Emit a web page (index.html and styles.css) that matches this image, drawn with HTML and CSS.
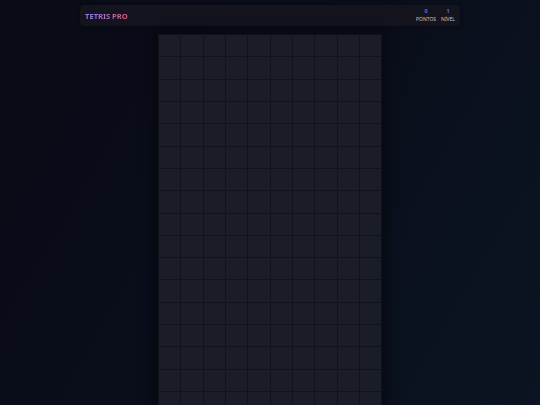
FILE: index.html
```html
<!DOCTYPE html>
<html lang="pt">
<head>
<meta charset="utf-8">
<title>Tetris Pro</title>
<link rel="stylesheet" href="styles.css">
</head>
<body>
<div class="app">
  <header class="topbar">
    <h1 class="title">TETRIS PRO</h1>
    <div class="stats">
      <div class="stat"><span class="value">0</span><span class="label">PONTOS</span></div>
      <div class="stat"><span class="value">1</span><span class="label">NÍVEL</span></div>
    </div>
  </header>
  <main class="stage">
    <div class="board" id="board"></div>
  </main>
</div>
<script src="app.js"></script>
</body>
</html>
```
FILE: styles.css
```css
html, body {
  margin: 0;
  padding: 0;
  height: 100%;
}
body {
  background: linear-gradient(120deg, #090b16 0%, #0a0e1b 50%, #0b1422 100%);
  font-family: "Noto Sans", "Open Sans", sans-serif;
  color: #c9cad3;
  overflow: hidden;
}
.app {
  width: 380px;
  margin: 0 auto;
  padding-top: 5px;
}
.topbar {
  height: 21px;
  box-sizing: border-box;
  display: flex;
  align-items: center;
  justify-content: space-between;
  padding: 0 5px;
  background: #13141e;
  border-radius: 4px;
  box-shadow: 0 1px 4px rgba(0,0,0,0.35);
}
.title {
  margin: 0;
  font-size: 7.6px;
  font-weight: 700;
  background: linear-gradient(90deg, #8a7cf2 0%, #b86ac0 55%, #e0567e 100%);
  -webkit-background-clip: text;
  background-clip: text;
  color: transparent;
}
.stats {
  display: flex;
  gap: 5px;
}
.stat {
  display: flex;
  flex-direction: column;
  align-items: center;
  line-height: 7px;
}
.value {
  font-size: 5.5px;
  font-weight: 700;
  color: #6a5fe0;
}
.label {
  font-size: 5px;
  color: #c4c5ce;
  margin-top: 0.5px;
}
.stage {
  display: flex;
  justify-content: center;
  padding-top: 8px;
}
.board {
  width: 224px;
  box-sizing: border-box;
  display: grid;
  grid-template-columns: repeat(10, 1fr);
  gap: 1px;
  padding: 1px;
  background: #11131c;
  box-shadow: 0 0 10px 4px rgba(3,4,10,0.55);
}
.cell {
  aspect-ratio: 1 / 1;
  background: #1a1c28;
}
```
FILE: app.js
```js
var board = document.getElementById('board');
for (var i = 0; i < 200; i++) {
  var c = document.createElement('div');
  c.className = 'cell';
  board.appendChild(c);
}
```
